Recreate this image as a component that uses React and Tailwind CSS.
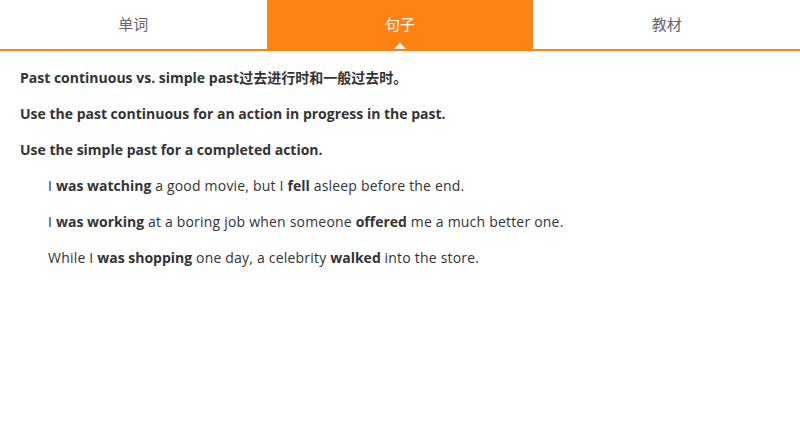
const tabs = ['单词', '句子', '教材'];

export default function App() {
  const active = 1;
  return (
    <div
      className="h-[440px] w-[800px] bg-white text-[#333]"
      style={{ fontFamily: '"Open Sans", "Noto Sans CJK SC", sans-serif' }}
    >
      {/* Tabs */}
      <div className="flex h-[51px] border-b-2 border-[#ff8214]">
        {tabs.map((t, i) => (
          <div
            key={t}
            className={
              i === active
                ? 'relative flex flex-1 items-center justify-center bg-[#ff8214] text-[15px] text-white'
                : 'flex flex-1 items-center justify-center text-[15px] text-[#666]'
            }
          >
            {t}
            {i === active && (
              <span className="absolute bottom-0 left-1/2 h-0 w-0 -translate-x-1/2 border-x-[6px] border-b-[6px] border-x-transparent border-b-white" />
            )}
          </div>
        ))}
      </div>

      {/* Sentences */}
      <div className="flex flex-col gap-[17px] px-5 pt-[17px] text-[14px] leading-[19px]">
        <p className="font-bold">Past continuous vs. simple past过去进行时和一般过去时。</p>
        <p className="font-bold">Use the past continuous for an action in progress in the past.</p>
        <p className="font-bold">Use the simple past for a completed action.</p>
        <p className="pl-7 tracking-[0.2px] [&_b]:tracking-normal">
          I <b>was watching</b> a good movie, but I <b>fell</b> asleep before the end.
        </p>
        <p className="pl-7 tracking-[0.2px] [&_b]:tracking-normal">
          I <b>was working</b> at a boring job when someone <b>offered</b> me a much better one.
        </p>
        <p className="pl-7 tracking-[0.2px] [&_b]:tracking-normal">
          While I <b>was shopping</b> one day, a celebrity <b>walked</b> into the store.
        </p>
      </div>
    </div>
  );
}
